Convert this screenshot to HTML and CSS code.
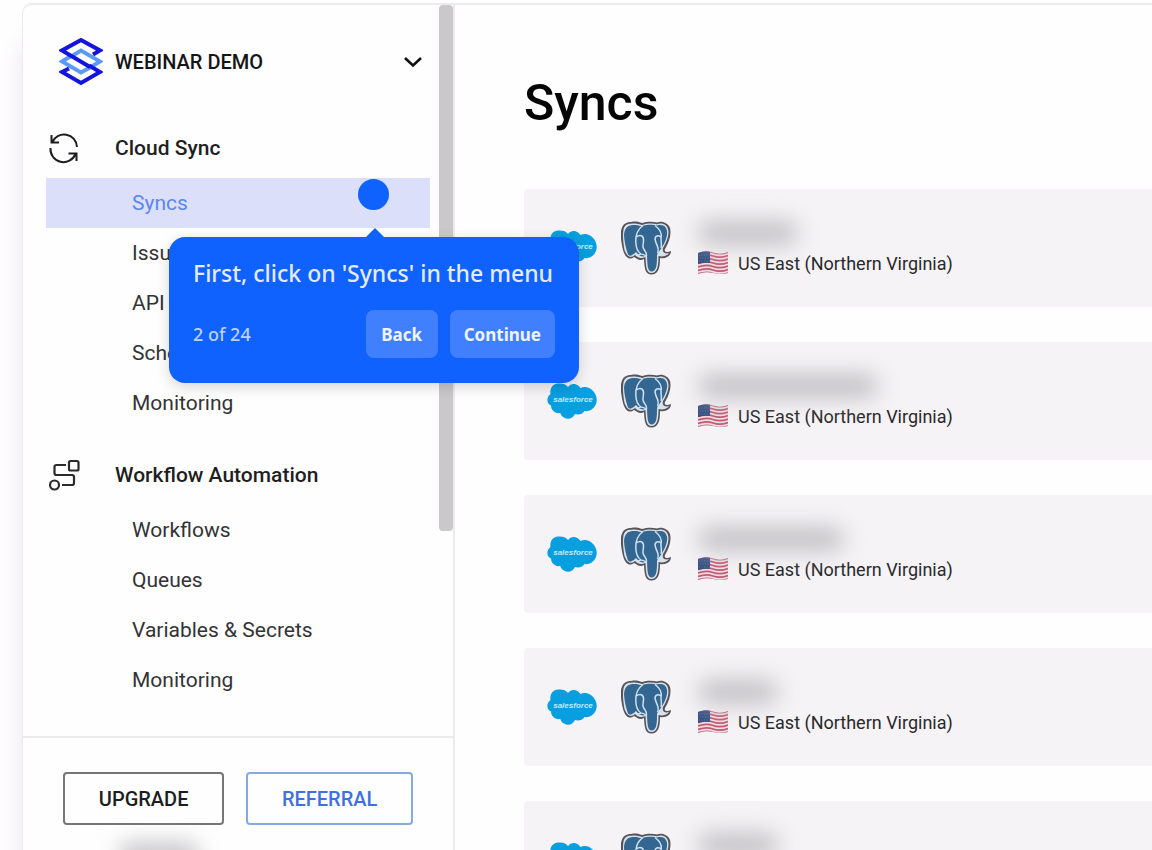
FILE: index.html
```html
<!DOCTYPE html>
<html lang="en">
<head>
<meta charset="utf-8">
<title>Syncs</title>
<link rel="stylesheet" href="styles.css">
</head>
<body>
<svg class="defs" aria-hidden="true">
  <symbol id="cloud" viewBox="0 0 50 36">
    <path fill="#079fe0" d="M21 4C23 1.500 26 .5 29 1.500 31 2 32.500 3.500 33.500 5 36 3.500 40 3.500 43 5.500 48 8.500 50.500 14 49.500 19 48.500 25 43 29 37.500 28 35.500 31.500 31 32 28 31 26 35.500 21 37 17 34.500 15 33.500 14 32 13.300 30 8 31 4 27 4 22.500 1 21 0 18.500.5 15.500 1 13 2.500 12 3.500 11 2.500 5 6 1 11 .5 15 0 19 1 21 4Z"/>
    <text class="cloud-text" x="26" y="19" text-anchor="middle">salesforce</text>
  </symbol>
  <symbol id="elephant" viewBox="0 0 50 54">
    <path fill="#55545a" d="M10 1C15 0 18 1 21 2 27 0 32 .5 36 1.500 41-.5 47 2 49 7 50.500 13 48.500 21 44 28 43 31 45 32 50 30 50 35 45 38 39 37 39 44 38.500 53 31 53.500 24 54 23.500 47 23 38 19 41 15 37 13 36 8 40 4 36 2 29 0 20-1 13 .5 8 2 3 5 1 10 1Z"/>
    <path fill="#d9e2ea" d="M10 2.800C15 1.800 18 2.800 21 4 27 2 32 2.300 36 3.300 41 1.300 46 3.800 47 8 48.500 13 46.500 20 42 27 41 31 43 33.500 48 32 46 35 42 36 37.500 35 37.500 43 37 51.500 31 52 25 52.500 25 45 24.500 36 19 38.500 16 36 14 34 9 38 6 35 3.500 29 2 20 1.500 14 2.500 8.500 3.500 4.500 6 2.800 10 2.800Z"/>
    <path fill="#336791" d="M10 4.200C14 3.500 17 4.200 20 5.200 27 3.500 32 3.500 36 4.500 41 3 45 5 45.800 9 47 13 45 20 41 26 39 30 37 31 36 34 36 42 36 50 31 50.500 26 50.500 26.500 43 26 34 22 37 18 35 15 31 12 34 9 36 7 33.500 5 28 3.200 20 3 14 3.500 8 6 5 10 4.200Z"/>
    <path fill="none" stroke="#cfe0ee" stroke-width="1.500" d="M22 4.500C17 8 14.500 14 14.800 21 15 28 17 31 20 33M15 16C20 13 23 15 22.500 20 22 25 21 26 24 30 25 31 25.500 33 25.500 35M34 4.500C40 9 41 13 40 17 40 22 41 24 40 27M40 16C36 13 33 16 34.500 20 35.500 25 39 27 36.500 32"/>
    <path fill="none" stroke="#cfe0ee" stroke-width="1.200" d="M17 34Q21 32 25 35"/>
  </symbol>
  <symbol id="flag" viewBox="0 0 30 24">
    <clipPath id="flag-shape"><path d="M0 2Q8-1 15 1.500T30 1V22Q23 24 15 22T0 23Z"/></clipPath>
    <g clip-path="url(#flag-shape)">
      <path fill="#efdde4" d="M0 0H30V24H0Z"/>
      <path fill="none" stroke="#c25a72" stroke-width="1.700" d="M0 2Q8-1 15 1.500T30 1M0 5.500Q8 2.500 15 5T30 4.500M0 9Q8 6 15 8.500T30 8M0 12.500Q8 9.500 15 12T30 11.500M0 16Q8 13 15 15.500T30 15M0 19.500Q8 16.500 15 19T30 18.500M0 23Q8 20 15 22.500T30 22"/>
      <path fill="#34507f" d="M0 1Q7-1 12 1V12Q7 11 0 13Z"/>
      <path stroke="#5f75a0" stroke-width="1" stroke-dasharray="1 1.500" d="M1 4H12M2 7H12M1 10H12"/>
    </g>
  </symbol>
</svg>
<div class="frame">
  <aside class="sidebar">
    <div class="side-scroll">
      <button class="workspace" type="button">
        <svg class="logo" viewBox="0 0 44 48" fill="none" stroke-width="4">
          <path stroke="#5b9bf8" d="M13 18 22 12.500 41 23.500 31 29.500M13 17.500 3 23.500 22 34.500 31 29.500"/>
          <path stroke="#1414dc" d="M31 29 3 12.500 22 2 41 12.500 34 16.500M10 30.500 3 34 22 45 41 34 30 27.500"/>
        </svg>
        <span class="workspace-name">WEBINAR DEMO</span>
        <svg class="chevron" viewBox="0 0 18 12" fill="none" stroke="#111" stroke-width="2.600"><path d="M1 2 9 9.500 17 2"/></svg>
      </button>
      <nav class="nav">
        <section>
          <h2 class="group">
            <svg class="group-icon" viewBox="0 0 30 30" fill="none" stroke="#1d1d1f" stroke-width="2"><path d="M3 9.500A13 13 0 0 1 28 14M2.500 2V9.500H10M1.500 15A13 13 0 0 0 26.500 21M27.500 28V20.500H19.500"/></svg>
            Cloud Sync
          </h2>
          <a class="item active" href="#syncs">Syncs</a>
          <a class="item" href="#issues">Issues</a>
          <a class="item" href="#api">API</a>
          <a class="item" href="#schedules">Schedules</a>
          <a class="item" href="#monitoring">Monitoring</a>
        </section>
        <section>
          <h2 class="group">
            <svg class="group-icon" viewBox="0 0 30 30" fill="none" stroke="#2b2b2e" stroke-width="2.200"><circle cx="5.500" cy="25" r="4.500"/><rect x="20" y="1" width="9.500" height="9.500" rx="1.500"/><path d="M17 5H7.500Q5.500 5 5.500 7V13Q5.500 15 7.500 15H23Q25 15 25 17V23Q25 25 23 25H13"/></svg>
            Workflow Automation
          </h2>
          <a class="item" href="#workflows">Workflows</a>
          <a class="item" href="#queues">Queues</a>
          <a class="item" href="#variables">Variables &amp; Secrets</a>
          <a class="item" href="#workflow-monitoring">Monitoring</a>
        </section>
      </nav>
      <div class="scrollbar"></div>
    </div>
    <footer class="side-foot">
      <div class="foot-buttons">
        <button class="outline" type="button">UPGRADE</button>
        <button class="outline blue" type="button">REFERRAL</button>
      </div>
      <div class="redacted account"></div>
    </footer>
  </aside>
  <main class="main">
    <h1 class="title">Syncs</h1>
    <div class="cards">
      <article class="card">
        <svg class="cloud"><use href="#cloud"/></svg><svg class="elephant"><use href="#elephant"/></svg>
        <div class="info"><div class="redacted w-s"></div><div class="region"><svg class="flag"><use href="#flag"/></svg>US East (Northern Virginia)</div></div>
      </article>
      <article class="card">
        <svg class="cloud"><use href="#cloud"/></svg><svg class="elephant"><use href="#elephant"/></svg>
        <div class="info"><div class="redacted w-l"></div><div class="region"><svg class="flag"><use href="#flag"/></svg>US East (Northern Virginia)</div></div>
      </article>
      <article class="card">
        <svg class="cloud"><use href="#cloud"/></svg><svg class="elephant"><use href="#elephant"/></svg>
        <div class="info"><div class="redacted w-m"></div><div class="region"><svg class="flag"><use href="#flag"/></svg>US East (Northern Virginia)</div></div>
      </article>
      <article class="card">
        <svg class="cloud"><use href="#cloud"/></svg><svg class="elephant"><use href="#elephant"/></svg>
        <div class="info"><div class="redacted w-xs"></div><div class="region"><svg class="flag"><use href="#flag"/></svg>US East (Northern Virginia)</div></div>
      </article>
      <article class="card">
        <svg class="cloud"><use href="#cloud"/></svg><svg class="elephant"><use href="#elephant"/></svg>
        <div class="info"><div class="redacted w-xs"></div><div class="region"><svg class="flag"><use href="#flag"/></svg>US East (Northern Virginia)</div></div>
      </article>
    </div>
  </main>
</div>
<div class="hotspot"></div>
<div class="tour" role="dialog" aria-labelledby="tour-title">
  <p class="tour-title" id="tour-title">First, click on 'Syncs' in the menu</p>
  <div class="tour-row">
    <span class="tour-step">2 of 24</span>
    <button class="tour-btn" type="button">Back</button>
    <button class="tour-btn" type="button">Continue</button>
  </div>
</div>
</body>
</html>
```
FILE: styles.css
```css
* { box-sizing: border-box; }
body {
  margin: 0;
  height: 100vh;
  overflow: hidden;
  position: relative;
  padding: 3px 0 0 22px;
  background: #fefdff;
  font-family: Roboto, sans-serif;
  color: #1f1f22;
}
.defs { position: absolute; width: 0; height: 0; }
button { font-family: inherit; cursor: pointer; }
.frame {
  display: flex;
  height: 100%;
  overflow: hidden;
  background: #fefefe;
  border: 2px solid #ebebed;
  border-width: 2px 0 0 1px;
  border-top-left-radius: 10px;
  box-shadow: 0 40px 24px rgba(60, 40, 80, .1);
}
.sidebar {
  display: flex;
  flex-direction: column;
  flex: 0 0 432px;
  border-right: 2px solid #ebebed;
}
.side-scroll { flex: 1; min-height: 0; overflow: hidden; position: relative; }
.scrollbar {
  position: absolute;
  top: 0;
  right: 0;
  width: 14px;
  height: 72%;
  border-radius: 4px;
  background: #cac8cb;
}
.workspace {
  display: flex;
  align-items: center;
  width: 100%;
  height: 113px;
  padding: 0 31px 0 36px;
  border: 0;
  background: none;
  color: #151517;
  font-size: 20px;
  font-weight: 500;
}
.logo { width: 44px; height: 48px; margin-right: 12px; }
.workspace-name { flex: 1; text-align: left; }
.chevron { width: 18px; height: 12px; }
.nav { display: flex; flex-direction: column; gap: 17px; padding: 0 23px; }
.group {
  display: flex;
  align-items: center;
  gap: 36px;
  height: 60px;
  margin: 0;
  padding-left: 3px;
  font-size: 21px;
  font-weight: 500;
}
.group-icon { width: 30px; height: 30px; overflow: visible; }
.item {
  display: flex;
  align-items: center;
  height: 50px;
  padding-left: 86px;
  color: #333336;
  font-size: 21px;
  text-decoration: none;
}
.item.active { background: #dbdff9; color: #5a88ec; }
.side-foot {
  border-top: 2px solid #ebebee;
  padding: 34px 40px 0;
  height: 114px;
  overflow: hidden;
}
.foot-buttons { display: flex; gap: 22px; }
.outline {
  flex: 161 0 0;
  height: 53px;
  border: 2px solid #77757a;
  border-radius: 4px;
  background: #fefefe;
  color: #1d1d20;
  font-size: 20px;
  font-weight: 500;
}
.outline.blue { flex-grow: 167; border-color: #86a8e6; color: #3f70df; }
.redacted { height: 24px; border-radius: 12px; background: #c2c0c3; filter: blur(11px); }
.account { width: 80px; margin: 18px 0 0 56px; }
.main { flex: 1; min-width: 0; padding: 66px 0 0 69px; }
.title { margin: 0 0 54px; color: #050506; font-size: 50px; line-height: 64px; font-weight: 500; }
.cards { display: grid; gap: 35px; }
.card {
  display: flex;
  align-items: center;
  height: 118px;
  padding-left: 23px;
  border-radius: 4px 0 0 4px;
  background: #f5f3f6;
}
.cloud { width: 50px; height: 36px; margin-right: 24px; }
.cloud-text { fill: #c4e8f8; font: italic bold 8px "Liberation Sans", sans-serif; }
.elephant { width: 50px; height: 54px; margin-right: 27px; }
.info { display: grid; gap: 6px; }
.region { display: flex; align-items: center; gap: 10px; height: 24px; font-size: 18px; color: #29292c; }
.flag { width: 30px; height: 24px; }
.w-xs { width: 80px; }
.w-s { width: 100px; }
.w-m { width: 146px; }
.w-l { width: 180px; }
.hotspot {
  position: absolute;
  left: 358px;
  top: 179px;
  width: 31px;
  height: 31px;
  border-radius: 50%;
  background: #0f62fe;
}
.tour {
  position: absolute;
  left: 169px;
  top: 237px;
  width: 410px;
  padding: 19px 24px 25px;
  border-radius: 16px;
  background: #0f62fe;
  color: #e4ebff;
  font-family: "Noto Sans", sans-serif;
  box-shadow: 0 4px 14px rgba(0, 0, 0, .16);
}
.tour::before {
  content: "";
  position: absolute;
  left: 197px;
  top: -9px;
  border: solid transparent;
  border-width: 0 9px 9px;
  border-bottom-color: #0f62fe;
}
.tour-title { margin: 0 0 20px; font-size: 23px; line-height: 34px; font-weight: 500; white-space: nowrap; }
.tour-row { display: flex; align-items: center; gap: 12px; }
.tour-step { flex: 1; font-size: 18px; font-weight: 500; color: #bcd1ff; }
.tour-btn {
  height: 48px;
  min-width: 72px;
  padding: 0 14px;
  border: 0;
  border-radius: 8px;
  background: #4080ff;
  color: #eef3ff;
  font-size: 17px;
  font-weight: 700;
}
```
